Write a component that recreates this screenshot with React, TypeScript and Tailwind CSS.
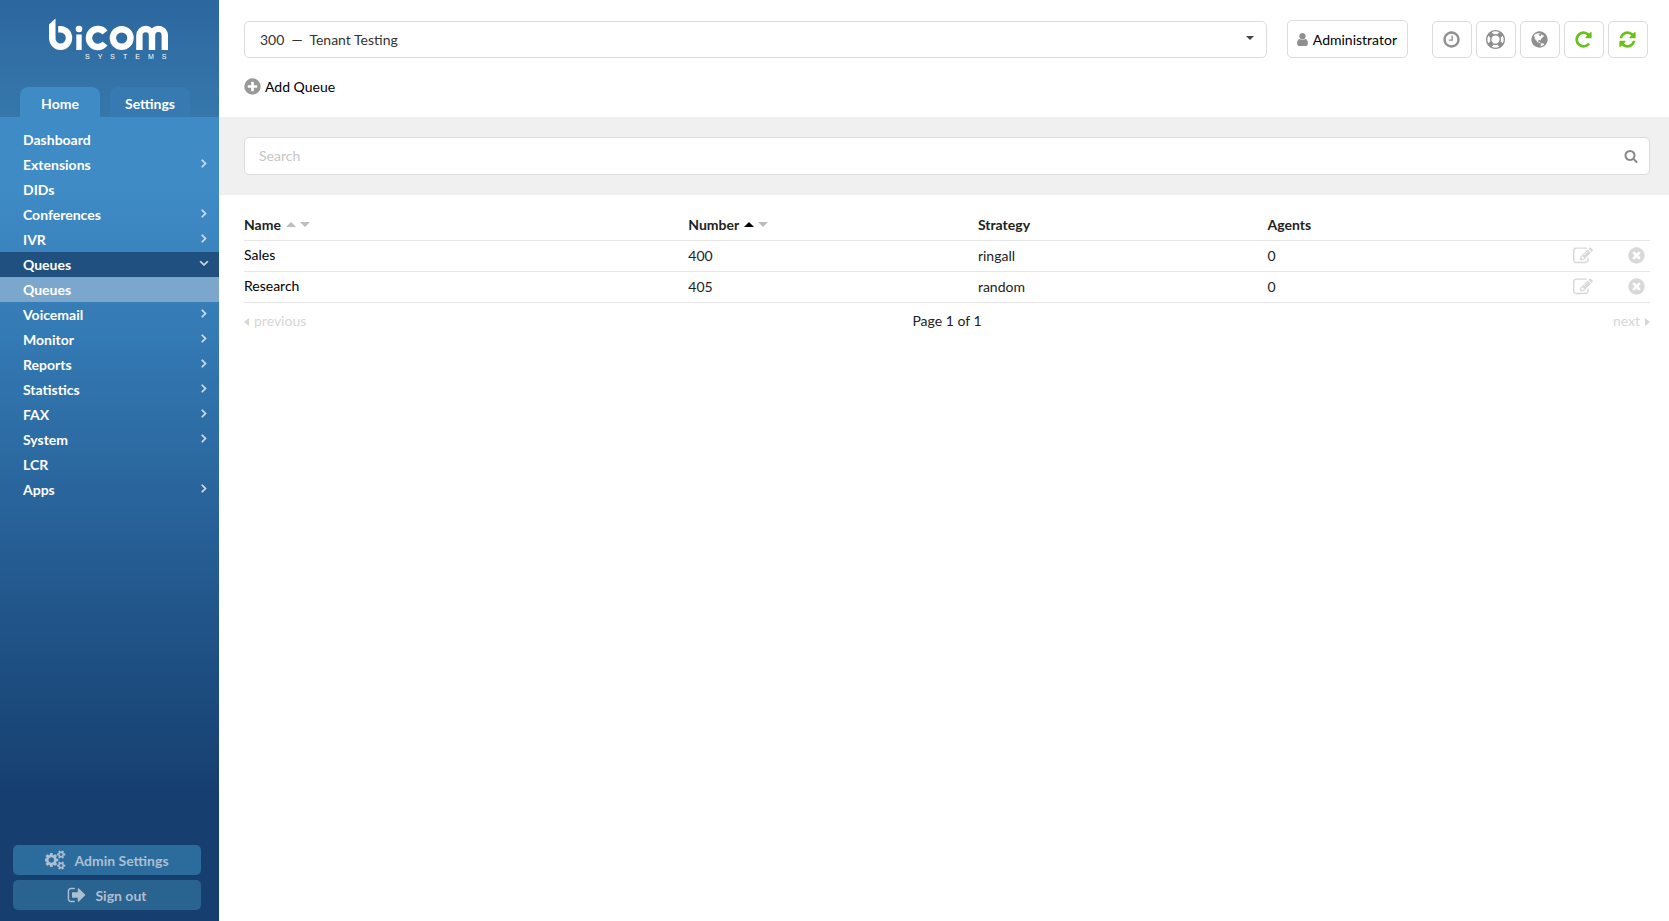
import React from "react";

const PATHS = {
  clock:
    "M1024 544v448q0 14-9 23t-23 9h-320q-14 0-23-9t-9-23v-64q0-14 9-23t23-9h224v-352q0-14 9-23t23-9h64q14 0 23 9t9 23zm416 352q0-148-73-273t-198-198-273-73-273 73-198 198-73 273 73 273 198 198 273 73 273-73 198-198 73-273zm224 0q0 209-103 385.5t-279.5 279.5-385.5 103-385.5-103-279.5-279.5-103-385.5 103-385.5 279.5-279.5 385.5-103 385.5 103 279.5 279.5 103 385.5z",
  plusCircle:
    "M1344 960v-128q0-26-19-45t-45-19h-256v-256q0-26-19-45t-45-19h-128q-26 0-45 19t-19 45v256h-256q-26 0-45 19t-19 45v128q0 26 19 45t45 19h256v256q0 26 19 45t45 19h128q26 0 45-19t19-45v-256h256q26 0 45-19t19-45zm320-64q0 209-103 385.5t-279.5 279.5-385.5 103-385.5-103-279.5-279.5-103-385.5 103-385.5 279.5-279.5 385.5-103 385.5 103 279.5 279.5 103 385.5z",
  timesCircle:
    "M1277 1122q0-26-19-45l-181-181 181-181q19-19 19-45 0-27-19-46l-90-90q-19-19-46-19-26 0-45 19l-181 181-181-181q-19-19-45-19-27 0-46 19l-90 90q-19 19-19 46 0 26 19 45l181 181-181 181q-19 19-19 45 0 27 19 46l90 90q19 19 46 19 26 0 45-19l181-181 181 181q19 19 45 19 27 0 46-19l90-90q19-19 19-46zm387-226q0 209-103 385.5t-279.5 279.5-385.5 103-385.5-103-279.5-279.5-103-385.5 103-385.5 279.5-279.5 385.5-103 385.5 103 279.5 279.5 103 385.5z",
  search:
    "M1216 832q0-185-131.5-316.5t-316.5-131.5-316.5 131.5-131.5 316.5 131.5 316.5 316.5 131.5 316.5-131.5 131.5-316.5zm512 832q0 52-38 90t-90 38q-54 0-90-38l-343-342q-179 124-399 124-143 0-273.5-55.5t-225-150-150-225-55.5-273.5 55.5-273.5 150-225 225-150 273.5-55.5 273.5 55.5 225 150 150 225 55.5 273.5q0 220-124 399l343 343q37 37 37 90z",
  refresh:
    "M1639 1056q0 5-1 7-64 268-268 434.5t-478 166.5q-146 0-282.5-55t-243.5-157l-129 129q-19 19-45 19t-45-19-19-45v-448q0-26 19-45t45-19h448q26 0 45 19t19 45-19 45l-137 137q71 66 161 102t187 36q134 0 250-65t186-179q11-17 53-117 8-23 30-23h192q13 0 22.5 9.5t9.5 22.5zm25-800v448q0 26-19 45t-45 19h-448q-26 0-45-19t-19-45 19-45l138-138q-148-137-349-137-134 0-250 65t-186 179q-11 17-53 117-8 23-30 23h-199q-13 0-22.5-9.5t-9.5-22.5v-7q65-268 270-434.5t480-166.5q146 0 284 55.5t245 156.5l130-129q19-19 45-19t45 19 19 45z",
  repeat:
    "M1664 256v448q0 26-19 45t-45 19h-448q-42 0-59-40-17-39 14-69l138-138q-148-137-349-137-104 0-198.5 40.5t-163.5 109.5-109.5 163.5-40.5 198.5 40.5 198.5 109.5 163.5 163.5 109.5 198.5 40.5q119 0 225-52t179-147q7-10 23-12 15 0 25 9l137 138q9 8 9.5 20.5t-7.5 22.5q-109 132-264 204.5t-327 72.5q-156 0-298-61t-245-164-164-245-61-298 61-298 164-245 245-164 298-61q147 0 284.5 55.5t244.5 156.5l130-129q29-31 70-14 39 17 39 59z",
  lifeRing:
    "M896 0q182 0 348 71t286 191 191 286 71 348-71 348-191 286-286 191-348 71-348-71-286-191-191-286-71-348 71-348 191-286 286-191 348-71zm0 128q-190 0-361 90l194 194q82-28 167-28t167 28l194-194q-171-90-361-90zm-678 1129l194-194q-28-82-28-167t28-167l-194-194q-90 171-90 361t90 361zm678 407q190 0 361-90l-194-194q-82 28-167 28t-167-28l-194 194q171 90 361 90zm0-384q159 0 271.5-112.5t112.5-271.5-112.5-271.5-271.5-112.5-271.5 112.5-112.5 271.5 112.5 271.5 271.5 112.5zm484-217l194 194q90-171 90-361t-90-361l-194 194q28 82 28 167t-28 167z",
  globe:
    "M896 128q209 0 385.5 103t279.5 279.5 103 385.5-103 385.5-279.5 279.5-385.5 103-385.5-103-279.5-279.5-103-385.5 103-385.5 279.5-279.5 385.5-103zm274 521q-2 1-9.5 9.5t-13.5 9.5q2 0 4.5-5t5-11 3.5-7q6-7 22-15 14-6 52-12 34-8 51 11-2-2 9.5-13t14.5-12q3-2 15-4.5t15-7.5l2-22q-12 1-17.5-7t-6.5-21q0 2-6 8 0-7-4.5-8t-11.5 1-9 1q-10-3-15-7.5t-8-16.5-4-15q-2-5-9.5-11t-9.5-10q-1-2-2.5-5.5t-3-6.5-4-5.5-5.5-2.5-7 5-7.5 10-4.5 5q-3-2-6-1.5t-4.5 1-4.5 3-5 3.5q-3 2-8.5 3t-8.5 2q15-5-1-11-10-4-16-3 9-4 7.5-12t-8.5-14h5q-1-4-8.5-8.5t-17.5-8.5-13-6q-8-5-34-9.5t-33-.5q-5 6-4.5 10.5t4 14 3.5 12.5q1 6-5.5 13t-6.5 12q0 7 14 15.5t10 21.5q-3 8-16 16t-16 12q-5 8-1.5 18.5t10.5 16.5q2 2 1.5 4t-3.5 4.5-5.5 4-6.5 3.5l-3 2q-11 5-20.5-6t-13.5-26q-7-25-16-30-23-8-29 1-5-13-41-26-25-9-58-4 6-1 0-15-7-15-19-12 3-6 4-17.5t1-13.5q3-13 12-23 1-1 7-8.5t9.5-13.5.5-6q35 4 50-11 5-5 11.5-17t10.5-17q9-6 14-5.5t14.5 5.5 14.5 5q14 1 15.5-11t-7.5-20q12 1 3-17-4-7-8-9-12-4-27 5-8 4 2 8-1-1-9.5 10.5t-16.5 17.5-16-5q-1-1-5.5-13.5t-9.5-13.5q-8 0-16 15 3-8-11-15t-24-8q19-12-8-27-7-4-20.5-5t-19.5 4q-5 7-5.5 11.5t5 8 10.5 5.5 11.5 4 8.5 3q14 10 8 14-2 1-8.5 3.5t-11.5 4.5-6 4q-3 4 0 14t-2 14q-5-5-9-17.5t-7-16.5q7 9-25 6l-10-1q-4 0-16 2t-20.5 1-13.5-8q-4-8 0-20 1-4 4-2-4-3-11-9.5t-10-8.5q-46 15-94 41 6 1 12-1 5-2 13-6.5t10-5.5q34-14 42-7l5-5q14 16 20 25-7-4-30-1-20 6-22 12 7 12 5 18-4-3-11.5-10t-14.5-11-15-5q-16 0-22 1-146 80-235 222 7 7 12 8 4 1 5 9t2.5 11 11.5-3q9 8 3 19 1-1 44 27 19 17 21 21 3 11-10 18-1-2-9-9t-9-4q-3 5 .5 18.5t10.5 12.5q-7 0-9.5 16t-2.5 35.5-1 23.5l2 1q-3 12 5.5 34.5t21.5 19.5q-13 3 20 43 6 8 8 9 3 2 12 7.5t15 10 10 10.5q4 5 10 22.5t14 23.5q-2 6 9.5 20t10.5 23q-1 0-2.5 1t-2.5 1q3 7 15.5 14t15.5 13q1 3 2 10t3 11 8 2q2-20-24-62-15-25-17-29-3-5-5.5-15.5t-4.5-14.5q2 0 6 1.5t8.5 3.5 7.5 4 2 3q-3 7 2 17.5t12 18.5 17 19 12 13q6 6 14 19.5t0 13.5q9 0 20 10t17 20q5 8 8 26t5 24q2 7 8.5 13.5t12.5 9.5l16 8 13 7q5 2 18.5 10.5t21.5 11.5q10 4 16 4t14.5-2.5 13.5-3.5q15-2 29 15t21 21q36 19 55 11-2 1 .5 7.5t8 15.5 9 14.5 5.5 8.5q5 6 18 15t18 15q6-4 7-9-3 8 7 20t18 10q14-3 14-32-31 15-49-18 0-1-2.5-5.5t-4-8.5-2.5-8.5 0-7.5 5-3q9 0 10-3.5t-2-12.5-4-13q-1-8-11-20t-12-15q-5 9-16 8t-16-9q0 1-1.5 5.5t-1.5 6.5q-13 0-15-1 1-3 2.5-17.5t3.5-22.5q1-4 5.5-12t7.5-14.5 4-12.5-4.5-9.5-17.5-2.5q-19 1-26 20-1 3-3 10.5t-5 11.5-9 7q-7 3-24 2t-24-5q-13-8-22.5-29t-9.5-37q0-10 2.5-26.5t3-25-5.5-24.5q3-2 9-9.5t10-10.5q2-1 4.5-1.5t4.5 0 4-1.5 3-6q-1-1-4-3-3-3-4-3 7 3 28.5-1.5t27.5 1.5q15 11 22-2 0-1-2.5-9.5t-.5-13.5q5 27 29 9 3 3 15.5 5t17.5 5q3 2 7 5.5t5.5 4.5 5-.5 8.5-6.5q10 14 12 24 11 40 19 44 7 3 11 2t4.5-9.5 0-14-1.5-12.5l-1-8v-18l-1-8q-15-3-18.5-12t1.5-18.5 15-18.5q1-1 8-3.5t15.5-6.5 12.5-8q21-19 15-35 7 0 11-9-1 0-5-3t-7.5-5-4.5-2q9-5 2-16 5-3 7.5-11t7.5-10q9 12 21 2 7-8 1-16 5-7 20.5-10.5t18.5-9.5q7 2 8-2t1-12 3-12q4-5 15-9t13-5l17-11q3-4 0-4 18 2 31-11 10-11-6-20 3-6-3-9.5t-15-5.5q3-1 11.5-.5t10.5-1.5q15-10-7-16-17-5-43 12zm-163 877q206-36 351-189-3-3-12.5-4.5t-12.5-3.5q-18-7-24-8 1-7-2.5-13t-8-9-12.5-8-11-7q-2-2-7-6t-7-5.5-7.5-4.5-8.5-2-10 1l-3 1q-3 1-5.5 2.5t-5.5 3-4 3 0 2.5q-21-17-36-22-5-1-11-5.5t-10.5-7-10-1.5-11.5 7q-5 5-6 15t-2 13q-7-5 0-17.5t2-18.5q-3-6-10.5-4.5t-12 4.5-11.5 8.5-9 6.5-8.5 5.5-8.5 7.5q-3 4-6 12t-5 11q-2-4-11.5-6.5t-9.5-5.5q2 10 4 35t5 38q7 31-12 48-27 25-29 40-4 22 12 26 0 7-8 20.5t-7 21.5q0 6 2 16z",
  user:
    "M1536 1399q0 109-62.5 187t-150.5 78h-854q-88 0-150.5-78t-62.5-187q0-85 8.5-160.5t31.5-152 58.5-131 94-89 134.5-34.5q131 128 313 128t313-128q76 0 134.5 34.5t94 89 58.5 131 31.5 152 8.5 160.5zm-256-887q0 159-112.5 271.5t-271.5 112.5-271.5-112.5-112.5-271.5 112.5-271.5 271.5-112.5 271.5 112.5 112.5 271.5z",
  cogs:
    "M832 896q0-106-75-181t-181-75-181 75-75 181 75 181 181 75 181-75 75-181zm768 512q0-52-38-90t-90-38-90 38-38 90q0 53 37.5 90.5t90.5 37.5 90.5-37.5 37.5-90.5zm0-1024q0-52-38-90t-90-38-90 38-38 90q0 53 37.5 90.5t90.5 37.5 90.5-37.5 37.5-90.5zm-384 421v185q0 10-7 19.5t-16 10.5l-155 24q-11 35-32 76 34 48 90 115 7 11 7 20 0 12-7 19-23 30-82.5 89.5t-78.5 59.5q-11 0-21-7l-115-90q-37 19-77 31-11 108-23 155-7 24-30 24h-186q-11 0-20-7.5t-10-17.5l-23-153q-34-10-75-31l-118 89q-7 7-20 7-11 0-21-8-144-133-144-160 0-9 7-19 10-14 41-53t47-61q-23-44-35-82l-152-24q-10-1-17-9.5t-7-19.5v-185q0-10 7-19.5t16-10.5l155-24q11-35 32-76-34-48-90-115-7-11-7-20 0-12 7-20 22-30 82-89t79-59q11 0 21 7l115 90q34-18 77-32 11-108 23-154 7-24 30-24h186q11 0 20 7.5t10 17.5l23 153q34 10 75 31l118-89q8-7 20-7 11 0 21 8 144 133 144 160 0 8-7 19-12 16-42 54t-45 60q23 48 34 82l152 23q10 2 17 10.5t7 19.5zm640 533v140q0 16-149 31-12 27-30 52 51 113 51 138 0 4-4 7-122 71-124 71-8 0-46-47t-52-68q-20 2-30 2t-30-2q-14 21-52 68t-46 47q-2 0-124-71-4-3-4-7 0-25 51-138-18-25-30-52-149-15-149-31v-140q0-16 149-31 13-29 30-52-51-113-51-138 0-4 4-7 4-2 35-20t59-34 30-16q8 0 46 46.5t52 67.5q20-2 30-2t30 2q51-71 92-112l6-2q4 0 124 70 4 3 4 7 0 25-51 138 17 23 30 52 149 15 149 31zm0-1024v140q0 16-149 31-12 27-30 52 51 113 51 138 0 4-4 7-122 71-124 71-8 0-46-47t-52-68q-20 2-30 2t-30-2q-14 21-52 68t-46 47q-2 0-124-71-4-3-4-7 0-25 51-138-18-25-30-52-149-15-149-31v-140q0-16 149-31 13-29 30-52-51-113-51-138 0-4 4-7 4-2 35-20t59-34 30-16q8 0 46 46.5t52 67.5q20-2 30-2t30 2q51-71 92-112l6-2q4 0 124 70 4 3 4 7 0 25-51 138 17 23 30 52 149 15 149 31z",
  signOut:
    "M704 1440q0 4 1 20t.5 26.5-3 23.5-10 19.5-20.5 6.5h-320q-119 0-203.5-84.5t-84.5-203.5v-704q0-119 84.5-203.5t203.5-84.5h320q13 0 22.5 9.5t9.5 22.5q0 4 1 20t.5 26.5-3 23.5-10 19.5-20.5 6.5h-320q-66 0-113 47t-47 113v704q0 66 47 113t113 47h312l11.5 1 11.5 3 8 5.5 7 9 2 13.5zm928-544q0 26-19 45l-544 544q-19 19-45 19t-45-19-19-45v-288h-448q-26 0-45-19t-19-45v-384q0-26 19-45t45-19h448v-288q0-26 19-45t45-19 45 19l544 544q19 19 19 45z",
  edit:
    "M888 1184l116-116-152-152-116 116v56h96v96h56zm440-720q-16-16-33 1l-350 350q-17 17-1 33t33-1l350-350q17-17 1-33zm80 594v190q0 119-84.5 203.5t-203.5 84.5h-832q-119 0-203.5-84.5t-84.5-203.5v-832q0-119 84.5-203.5t203.5-84.5h832q63 0 117 25 15 7 18 23 3 17-9 29l-49 49q-14 14-32 8-23-6-45-6h-832q-66 0-113 47t-47 113v832q0 66 47 113t113 47h832q66 0 113-47t47-113v-126q0-13 9-22l64-64q15-15 35-7t20 29zm-96-738l288 288-672 672h-288v-288zm444 132l-92 92-288-288 92-92q28-28 68-28t68 28l152 152q28 28 28 68t-28 68z",
  angleRight:
    "M1171 960q0 13-10 23l-466 466q-10 10-23 10t-23-10l-50-50q-10-10-10-23t10-23l393-393-393-393q-10-10-10-23t10-23l50-50q10-10 23-10t23 10l466 466q10 10 10 23z",
  angleDown:
    "M1395 736q0 13-10 23l-466 466q-10 10-23 10t-23-10l-466-466q-10-10-10-23t10-23l50-50q10-10 23-10t23 10l393 393 393-393q10-10 23-10t23 10l50 50q10 10 10 23z",
};

type IconName = keyof typeof PATHS;

function Icon({ name, className }: { name: IconName; className: string }) {
  const width = name === "cogs" ? 1920 : 1792;
  return (
    <svg viewBox={`0 0 ${width} 1792`} fill="currentColor" aria-hidden="true" className={className}>
      <path d={PATHS[name]} />
    </svg>
  );
}

function Logo() {
  return (
    <a href="#home" aria-label="bicom systems" className="ml-12 block w-[124px] text-white">
      <svg viewBox="48 18 124 33" className="block h-[33px] w-[124px]" fill="none" stroke="currentColor" strokeWidth="6.4" aria-hidden="true">
        <path d="M49 24.5 55.5 18.6V38H49z" fill="currentColor" stroke="none" />
        <path d="M52.2 37v1a8.4 8.8 0 1 0 8.4-8.8h-2.4" />
        <circle cx="79" cy="29" r="3.3" fill="currentColor" stroke="none" />
        <path d="M79 34.5V50" strokeWidth="5.4" />
        <path d="M105 32.4a9 9 0 1 0 0 11.2" />
        <circle cx="121.7" cy="38" r="8.8" />
        <path d="M139.4 50V35.5a6.3 6.5 0 0 1 12.6 0V50M152 50V35.5a6.3 6.5 0 0 1 12.8 0V50" />
      </svg>
      <div aria-hidden="true" className="pl-[37px] text-[7px] leading-[12px] tracking-[8px] font-['Liberation_Sans',sans-serif]">
        SYSTEMS
      </div>
    </a>
  );
}

type Item = { label: string; state?: "closed" | "open" | "current" };

const MENU: Item[] = [
  { label: "Dashboard" },
  { label: "Extensions", state: "closed" },
  { label: "DIDs" },
  { label: "Conferences", state: "closed" },
  { label: "IVR", state: "closed" },
  { label: "Queues", state: "open" },
  { label: "Queues", state: "current" },
  { label: "Voicemail", state: "closed" },
  { label: "Monitor", state: "closed" },
  { label: "Reports", state: "closed" },
  { label: "Statistics", state: "closed" },
  { label: "FAX", state: "closed" },
  { label: "System", state: "closed" },
  { label: "LCR" },
  { label: "Apps", state: "closed" },
];

function MenuItem({ label, state }: Item) {
  const background = state === "open" ? "bg-[#20507f]" : state === "current" ? "bg-[#7ca7cd]" : "";
  return (
    <li>
      <a href="#menu" className={`flex h-[25px] items-center justify-between pr-2 pl-[23px] ${background}`}>
        {label}
        {state === "closed" && (
          <Icon name="angleRight" className="mb-[3px] size-[14px] stroke-current text-[#d3dfea] [stroke-width:90]" />
        )}
        {state === "open" && (
          <Icon name="angleDown" className="mb-[3px] size-[14px] stroke-current text-[#d3dfea] [stroke-width:90]" />
        )}
      </a>
    </li>
  );
}

function Sidebar() {
  return (
    <aside className="flex w-[219px] shrink-0 flex-col">
      <div className="flex h-[117px] flex-col justify-between bg-linear-to-b from-[#2c679f] to-[#3678ab] pt-[18px]">
        <Logo />
        <div className="flex gap-[10px] pl-5 text-[14px] font-bold text-white">
          <a href="#home" className="flex h-[30px] w-20 items-center justify-center rounded-t-[8px] bg-[#3f8bc5] pt-0.5">
            Home
          </a>
          <a href="#settings" className="flex h-[30px] w-20 items-center justify-center rounded-t-[8px] bg-[#377ab2] pt-0.5">
            Settings
          </a>
        </div>
      </div>
      <div className="flex grow flex-col justify-between bg-linear-to-b from-[#3f8bc6] from-9% via-[#347ab4] via-27% to-[#163f70] to-84% pt-[10px] pb-[11px]">
        <nav>
          <ul className="text-[14px] font-bold text-white">
            {MENU.map((item, i) => (
              <MenuItem key={i} {...item} />
            ))}
          </ul>
        </nav>
        <div className="flex flex-col gap-[5px] pr-[18px] pl-[13px] text-[14px] font-bold text-[#adbfd3]">
          <button type="button" className="flex h-[30px] items-center justify-center gap-2 rounded-[5px] bg-[#2b6c9c]">
            <Icon name="cogs" className="h-5 w-[21px]" />
            Admin Settings
          </button>
          <button type="button" className="flex h-[30px] items-center justify-center gap-2 rounded-[5px] bg-[#29638f]">
            <Icon name="signOut" className="size-5" />
            Sign out
          </button>
        </div>
      </div>
    </aside>
  );
}

const TOOLS: { name: IconName; label: string; color: string }[] = [
  { name: "clock", label: "Time", color: "text-[#8f8f8f]" },
  { name: "lifeRing", label: "Help", color: "text-[#8f8f8f]" },
  { name: "globe", label: "Language", color: "text-[#8f8f8f]" },
  { name: "repeat", label: "Reload", color: "text-[#6cc01e]" },
  { name: "refresh", label: "Sync", color: "text-[#6cc01e]" },
];

function TopBar() {
  return (
    <div className="flex items-end pr-[21px] pl-[25px] pt-5">
      <div className="relative grow">
        <select
          aria-label="Tenant"
          className="block h-[37px] w-full appearance-none rounded-[5px] border border-[#dcdcdc] bg-white pl-[15px] text-[14px] text-[#333]"
        >
          <option>{"300 \u00a0\u2014\u00a0 Tenant Testing"}</option>
        </select>
        <svg viewBox="0 0 8 4" className="pointer-events-none absolute top-[15px] right-[13px] h-1 w-2" fill="#444" aria-hidden="true">
          <path d="M0 0h8L4 4z" />
        </svg>
      </div>
      <button
        type="button"
        className="ml-5 flex h-[38px] items-center gap-[3px] rounded-[5px] border border-[#dcdcdc] pr-[10px] pl-[7px] text-[14px] text-black"
      >
        <Icon name="user" className="size-[15px] text-[#8f8f8f]" />
        Administrator
      </button>
      <div className="ml-6 flex gap-1">
        {TOOLS.map((tool) => (
          <button
            key={tool.name}
            type="button"
            aria-label={tool.label}
            className={`flex h-[37px] w-10 items-center justify-center rounded-[5px] border border-[#dcdcdc] pr-px ${tool.color}`}
          >
            <Icon name={tool.name} className="size-[19px]" />
          </button>
        ))}
      </div>
    </div>
  );
}

function SortArrows({ label, active }: { label: string; active?: boolean }) {
  return (
    <span className="flex gap-1">
      <button type="button" aria-label={`Sort by ${label}, ascending`} className={active ? "text-black" : "text-[#bdbdbd]"}>
        <svg viewBox="0 0 10 5" className="block h-[5px] w-[10px]" fill="currentColor" aria-hidden="true">
          <path d="M0 5h10L5 0z" />
        </svg>
      </button>
      <button type="button" aria-label={`Sort by ${label}, descending`} className="text-[#bdbdbd]">
        <svg viewBox="0 0 10 5" className="block h-[5px] w-[10px]" fill="currentColor" aria-hidden="true">
          <path d="M0 0h10L5 5z" />
        </svg>
      </button>
    </span>
  );
}

const ROWS = [
  { name: "Sales", number: "400", strategy: "ringall", agents: "0" },
  { name: "Research", number: "405", strategy: "random", agents: "0" },
];

function QueueTable() {
  return (
    <table className="w-full table-fixed text-left text-[14px] text-[#222]">
      <thead>
        <tr className="h-[31px] border-b border-[#e6e6e6]">
          <th className="w-[31.6%]">
            <span className="flex items-center gap-[5px]">
              Name <SortArrows label="name" />
            </span>
          </th>
          <th className="w-[20.6%]">
            <span className="flex items-center gap-[5px]">
              Number <SortArrows label="number" active />
            </span>
          </th>
          <th className="w-[20.6%]">Strategy</th>
          <th>Agents</th>
          <th className="w-[70px]" aria-label="Edit" />
          <th className="w-[38px]" aria-label="Delete" />
        </tr>
      </thead>
      <tbody>
        {ROWS.map((row) => (
          <tr key={row.name} className="h-[31px] border-b border-[#e6e6e6]">
            <td className="pb-0.5 text-black">
              <a href="#queue">{row.name}</a>
            </td>
            <td>{row.number}</td>
            <td>{row.strategy}</td>
            <td>{row.agents}</td>
            <td className="text-[#dad8d7]">
              <button type="button" aria-label={`Edit ${row.name}`} className="ml-[31px] block">
                <Icon name="edit" className="size-5" />
              </button>
            </td>
            <td className="text-[#dad8d7]">
              <button type="button" aria-label={`Delete ${row.name}`} className="ml-[15px] block">
                <Icon name="timesCircle" className="size-[19px]" />
              </button>
            </td>
          </tr>
        ))}
      </tbody>
    </table>
  );
}

function Caret({ d }: { d: string }) {
  return (
    <svg viewBox="0 0 5 8" className="mt-0.5 h-2 w-[5px]" fill="currentColor" aria-hidden="true">
      <path d={d} />
    </svg>
  );
}

function Pager() {
  return (
    <div className="grid h-[36px] grid-cols-3 items-center text-[14px] text-[#d6d6d6]">
      <button type="button" className="flex items-center gap-[5px] justify-self-start">
        <Caret d="M5 0v8L0 4z" />
        previous
      </button>
      <span className="text-center text-[#222]">Page 1 of 1</span>
      <button type="button" className="flex items-center gap-[5px] justify-self-end">
        next
        <Caret d="M0 0v8l5-4z" />
      </button>
    </div>
  );
}

export default function App() {
  return (
    <div className="flex min-h-screen bg-white font-[Lato,sans-serif]">
      <Sidebar />
      <main className="min-w-0 grow">
        <header className="h-[117px]">
          <TopBar />
          <a href="#add" className="mt-[18px] ml-6 inline-flex items-center gap-[3px] text-[14px] text-black">
            <Icon name="plusCircle" className="size-[19px] text-[#999]" />
            Add Queue
          </a>
        </header>
        <div className="bg-[#f0f0f0] py-5 pr-[19px] pl-[25px]">
          <label className="flex h-[38px] items-center rounded-[5px] border border-[#dcdcdc] bg-white pr-[11px] pl-[14px]">
            <input
              type="text"
              aria-label="Search"
              placeholder="Search"
              className="h-full grow bg-transparent pb-0.5 text-[14px] text-[#333] outline-none placeholder:text-[#c6c6c6]"
            />
            <Icon name="search" className="size-[14px] text-[#8a8a8a]" />
          </label>
        </div>
        <section className="pt-[14px] pr-[19px] pl-[25px]">
          <QueueTable />
          <Pager />
        </section>
      </main>
    </div>
  );
}
